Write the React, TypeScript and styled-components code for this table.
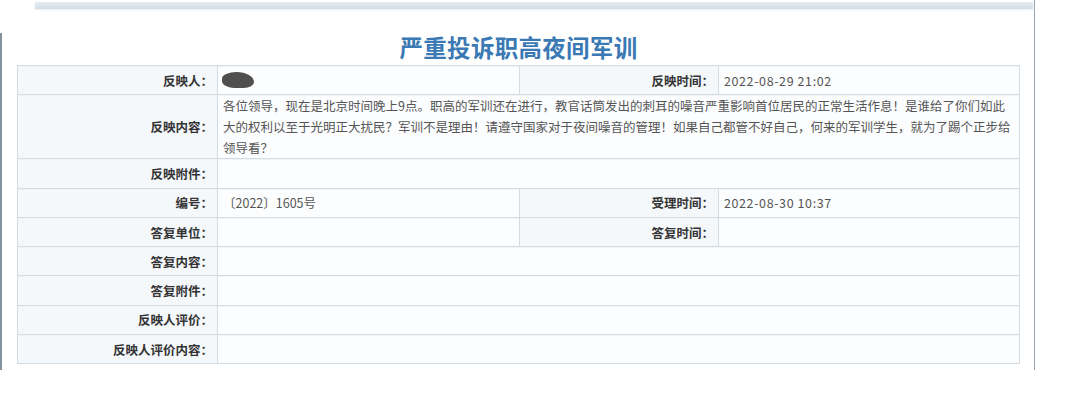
import React from "react";
import styled, { createGlobalStyle } from "styled-components";

const GlobalStyle = createGlobalStyle`
  html, body { margin: 0; padding: 0; background: #ffffff; }
  body { font-family: "Noto Sans CJK SC", "Noto Sans", sans-serif; }
  * { box-sizing: border-box; }
`;

const Frame = styled.div`
  width: 1035px;
  height: 370px;
  border-right: 1px solid #98a6b3;
  display: flex;
  flex-direction: column;
`;

const TopBar = styled.div`
  margin: 2px 1px 0 35px;
  height: 7px;
  background: linear-gradient(to bottom, #e6edf3, #d3dde7);
  box-shadow: 0 1px 2px rgba(120, 140, 160, 0.15);
`;

const Body = styled.div`
  margin-top: 24px;
  flex: 1;
  border-left: 2px solid #82929f;
  padding-left: 15px;
  display: flex;
  flex-direction: column;
`;

const Title = styled.h1`
  margin: 0 0 4px;
  width: 1003px;
  height: 28px;
  line-height: 28px;
  text-align: center;
  font-size: 23.5px;
  font-weight: 700;
  color: #3b79b4;
  letter-spacing: 0.3px;
`;

const Table = styled.div`
  width: 1003px;
  display: grid;
  grid-template-columns: 200px 302px 199px 301px;
  border-top: 1px solid #d3dbe3;
  border-left: 1px solid #d3dbe3;
  font-size: 12.5px;
`;

const Cell = styled.div<{ $label?: boolean; $span?: number }>`
  grid-column: span ${(p) => p.$span ?? 1};
  min-height: 29.3px;
  border-right: 1px solid #d3dbe3;
  border-bottom: 1px solid #d3dbe3;
  box-shadow: inset 0 1px 0 #f0f4f7;
  padding: 0 ${(p) => (p.$label ? "4px" : "5px")} 0 5px;
  display: flex;
  align-items: center;
  justify-content: ${(p) => (p.$label ? "flex-end" : "flex-start")};
  text-align: ${(p) => (p.$label ? "right" : "left")};
  line-height: 21px;
  background: ${(p) => (p.$label ? "#f5f8fb" : "#fcfdfe")};
  color: ${(p) => (p.$label ? "#333333" : "#555555")};
  font-weight: ${(p) => (p.$label ? 700 : 400)};
`;

const Stamp = styled.span`
  letter-spacing: 0.6px;
`;

const Redacted = styled.span`
  display: inline-block;
  width: 32px;
  height: 16px;
  margin-left: -1px;
  background: #4f4f4f;
  border-radius: 50% 60% 35% 40% / 45% 70% 40% 50%;
  filter: blur(0.5px);
`;

type Row =
  | { kind: "pair"; l1: string; v1: React.ReactNode; l2: string; v2: React.ReactNode }
  | { kind: "wide"; l: string; v: React.ReactNode };

const content =
  "各位领导，现在是北京时间晚上9点。职高的军训还在进行，教官话筒发出的刺耳的噪音严重影响首位居民的正常生活作息！是谁给了你们如此大的权利以至于光明正大扰民？军训不是理由！请遵守国家对于夜间噪音的管理！如果自己都管不好自己，何来的军训学生，就为了踢个正步给领导看？";

const rows: Row[] = [
  { kind: "pair", l1: "反映人：", v1: <Redacted />, l2: "反映时间：", v2: <Stamp>2022-08-29 21:02</Stamp> },
  { kind: "wide", l: "反映内容：", v: content },
  { kind: "wide", l: "反映附件：", v: "" },
  { kind: "pair", l1: "编号：", v1: "〔2022〕1605号", l2: "受理时间：", v2: <Stamp>2022-08-30 10:37</Stamp> },
  { kind: "pair", l1: "答复单位：", v1: "", l2: "答复时间：", v2: "" },
  { kind: "wide", l: "答复内容：", v: "" },
  { kind: "wide", l: "答复附件：", v: "" },
  { kind: "wide", l: "反映人评价：", v: "" },
  { kind: "wide", l: "反映人评价内容：", v: "" },
];

export default function App() {
  return (
    <>
      <GlobalStyle />
      <Frame>
        <TopBar />
        <Body>
          <Title>严重投诉职高夜间军训</Title>
          <Table>
            {rows.map((r, i) =>
              r.kind === "pair" ? (
                <React.Fragment key={i}>
                  <Cell $label>{r.l1}</Cell>
                  <Cell>{r.v1}</Cell>
                  <Cell $label>{r.l2}</Cell>
                  <Cell>{r.v2}</Cell>
                </React.Fragment>
              ) : (
                <React.Fragment key={i}>
                  <Cell $label>{r.l}</Cell>
                  <Cell $span={3}>{r.v}</Cell>
                </React.Fragment>
              )
            )}
          </Table>
        </Body>
      </Frame>
    </>
  );
}
